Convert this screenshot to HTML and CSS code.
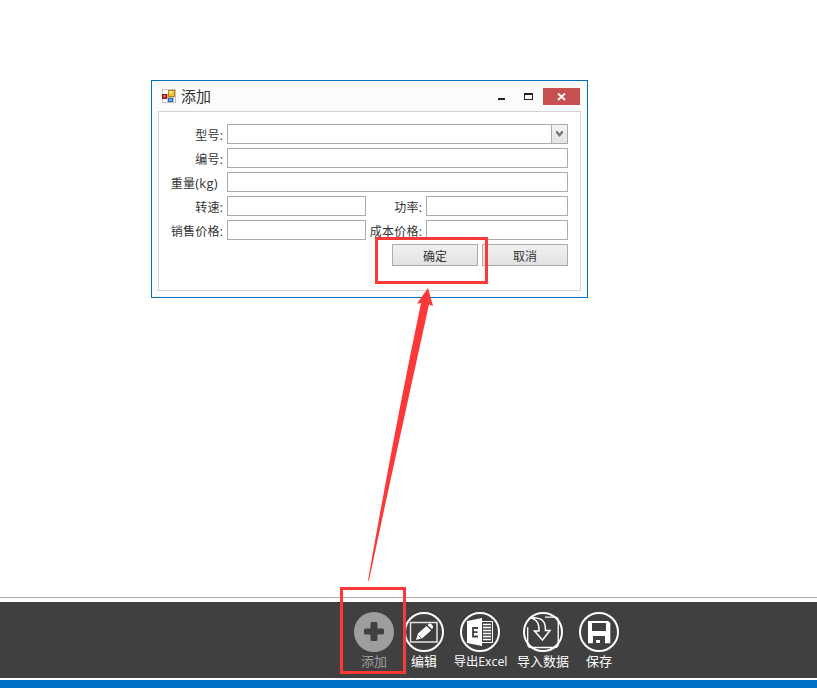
FILE: index.html
```html
<!DOCTYPE html>
<html lang="zh-CN">
<head>
<meta charset="utf-8">
<title>添加</title>
<link rel="stylesheet" href="styles.css">
</head>
<body>
<main class="workspace">
  <section class="dialog">
    <header class="titlebar">
      <svg class="app-icon" width="14" height="14" viewBox="0 0 14 14" shape-rendering="crispEdges">
        <path d="M0 0h14v14H0z" fill="#c3c3c3"/><path d="M1 1h5v4H1zM1 10h4v3H1zM12 8h1v5h-1z" fill="#fff"/>
        <path d="M0 5h5v5H0z" fill="#9c1313"/><path d="M1 6h3v3H1z" fill="#c92e20"/><path d="M2 6h1v2H2z" fill="#f5a69a"/>
        <path d="M6 1h7v7H6z" fill="#b98212"/><path d="M7 2h5v5H7z" fill="#fbc72e"/><path d="M7 2h3v2H7z" fill="#ffe88a"/>
        <path d="M6 9h5v4H6z" fill="#2c63c9"/><path d="M7 10h3v2H7z" fill="#78aaf4"/>
      </svg>
      <h1 class="title">添加</h1>
      <svg class="controls" width="84" height="17" viewBox="0 0 84 17">
        <path d="M2 10h7v2H2z" fill="#222"/>
        <path d="M28 5h9v7h-9zM29 7v4h7V7z" fill="#222" fill-rule="evenodd"/>
        <path d="M47 0h37v17H47z" fill="#c75050"/>
        <path d="M62 5.500l7 6.500M69 5.500l-7 6.500" stroke="#fff" stroke-width="1.800"/>
      </svg>
    </header>
    <form class="panel">
      <label class="label" for="model">型号:</label>
      <div class="combo wide">
        <input class="combo-text" id="model">
        <button class="combo-button" type="button"><svg width="7" height="6" viewBox="0 0 7 6"><path d="M0 0h1.500l2 2.500L5.500 0H7v2L3.500 6 0 2z" fill="#777"/></svg></button>
      </div>
      <label class="label" for="code">编号:</label><input class="field wide" id="code">
      <label class="label start" for="weight">重量<span class="unit">(kg)</span></label><input class="field wide" id="weight">
      <label class="label" for="speed">转速:</label><input class="field" id="speed">
      <label class="label" for="power">功率:</label><input class="field" id="power">
      <label class="label" for="price">销售价格:</label><input class="field" id="price">
      <label class="label" for="cost">成本价格:</label><input class="field" id="cost">
      <div class="actions">
        <button class="button" type="button">确定</button>
        <button class="button" type="button">取消</button>
      </div>
    </form>
  </section>
</main>
<nav class="toolbar">
  <div class="tool active">
    <svg width="40" height="40" viewBox="0 0 40 40"><circle cx="20" cy="20" r="20" fill="#9e9e9e"/><path d="M18 10h4q1.500 0 1.500 1.500V16.500H28.500q1.500 0 1.500 1.500v3q0 1.500-1.500 1.500H23.500v5q0 1.500-1.500 1.500h-4q-1.500 0-1.500-1.500v-5h-5q-1.500 0-1.500-1.500v-3q0-1.500 1.500-1.500h5v-5q0-1.500 1.500-1.500z" fill="#404040"/></svg>
    <span>添加</span>
  </div>
  <div class="tool">
    <svg width="40" height="40" viewBox="0 0 40 40" fill="none" stroke="#fff"><circle cx="20" cy="20" r="19" stroke-width="2"/><path d="M6.500 10.500h26.500v19.500h-26.500z" stroke="#e4e4e4" stroke-width="1.500"/><path d="M12 28l2-6.500 8.500-7.500 4.500 4.500-8.500 7.500zM23.500 13l1.500-1.300q1.500-.5 3 1t1 3L27.800 17z" fill="#fff" stroke="none"/><path d="M14.500 23.500l2.500 2.500" stroke="#404040" stroke-width=".8"/></svg>
    <span>编辑</span>
  </div>
  <div class="tool export">
    <svg width="40" height="40" viewBox="0 0 40 40" fill="none" stroke="#fff"><circle cx="20" cy="20" r="19" stroke-width="2"/><path d="M7 9l15-3v28L7 31z" fill="#fff" stroke="none"/><path d="M22 9.500h10.500v21H22"/><path d="M23 12.500h8M23 15.500h8M23 18.500h8M23 21.500h8M23 24.500h8M23 27.500h8" stroke-width="1.300"/><path d="M18 16H13v8.500h5M13 20.200h4.500" stroke="#404040" stroke-width="1.800"/></svg>
    <span>导出Excel</span>
  </div>
  <div class="tool">
    <svg width="40" height="40" viewBox="0 0 40 40" fill="none" stroke="#fff"><circle cx="20" cy="20" r="19" stroke-width="2"/><path d="M4.700 15v17q0 3.500 3.500 3.500h23.500q3.500 0 3.500-3.500V8.500q0-3.300-3.500-3.300H22" stroke-width="1.300"/><path d="M7 5.500q6.500 2 8 6t1 7.500h-4.500L19.500 28 27 18.500h-4.500q0-7-2.500-9.500-3-3.500-13-3.500z" stroke-width="1.500"/></svg>
    <span>导入数据</span>
  </div>
  <div class="tool">
    <svg width="40" height="40" viewBox="0 0 40 40"><circle cx="20" cy="20" r="19" fill="none" stroke="#fff" stroke-width="2"/><path d="M9 9h20l2.300 2v20.300H9zM13 11v8h14v-8zM14 24v7.300h12v-7.300z" fill="#fff" fill-rule="evenodd"/><path d="M17 28h4v3h-4z" fill="#fff"/></svg>
    <span>保存</span>
  </div>
</nav>
<footer class="statusbar"></footer>
<svg class="annotations" width="817" height="688" viewBox="0 0 817 688">
  <path d="M376.500 238.500h110v44h-110zM341.500 588.500h63v84h-63z" fill="none" stroke="#fd3838" stroke-width="3"/>
  <path d="M428 288l5 18-4-1.500Q408 400 386 501L369 580.500h-1Q393 437 421 303l-4 .5z" fill="#fd3838"/>
</svg>
</body>
</html>
```
FILE: styles.css
```css
* { box-sizing: border-box; }
body {
  display: flex;
  flex-direction: column;
  height: 688px;
  margin: 0;
  overflow: hidden;
  background: #fff;
  color: #333;
  font: 12px/18px "Open Sans", "Noto Sans CJK SC", sans-serif;
}
.workspace {
  height: 598px;
  padding: 80px 0 0 151px;
  border-bottom: 1px solid #ababab;
}
.dialog {
  width: 437px;
  height: 218px;
  padding: 0 6px;
  border: 1px solid #0072c6;
  background: #fbfbfb;
}
.titlebar {
  display: flex;
  align-items: center;
  height: 30px;
  padding: 0 1px 0 4px;
}
.title {
  margin: 0 0 0 5px;
  font-size: 15px;
  font-weight: 400;
  line-height: 20px;
}
.controls { margin-left: auto; }
.panel {
  display: grid;
  grid-template-columns: 56px 139px 60px 142px;
  grid-auto-rows: 20px;
  row-gap: 4px;
  height: 180px;
  padding: 12px;
  border: 1px solid #d4d4d4;
  background: #fff;
}
.label {
  display: flex;
  justify-content: flex-end;
  padding: 3px 4px 0 0;
  letter-spacing: 0.2px;
  line-height: 17px;
  white-space: nowrap;
}
.label.start { padding-right: 9px; }
.unit { font-size: 13px; letter-spacing: 0.3px; }
.field, .combo {
  min-width: 0;
  width: 100%;
  height: 20px;
  padding: 0;
  border: 1px solid #ababab;
  background: #fff;
}
.wide { grid-column: 2 / -1; }
.combo { display: flex; }
.combo-text { flex: 1; min-width: 0; padding: 0; border: 0; background: none; }
.combo-button {
  display: flex;
  align-items: center;
  justify-content: center;
  width: 16px;
  padding: 0;
  border: 0;
  border-left: 1px solid #ababab;
  background: linear-gradient(#f3f3f3, #e3e3e3);
}
.actions {
  display: flex;
  grid-column: 1 / -1;
  justify-content: flex-end;
  gap: 4px;
}
.button {
  width: 86px;
  height: 22px;
  padding: 3px 0 0;
  border: 1px solid #ababab;
  background: linear-gradient(#f1f1f1, #e2e2e2);
  color: #333;
  font: inherit;
  line-height: 17px;
}
.toolbar {
  display: flex;
  gap: 10px;
  height: 76px;
  margin-top: 4px;
  padding: 10px 0 0 354px;
  background: #404040;
}
.tool {
  display: flex;
  flex-direction: column;
  align-items: center;
  min-width: 40px;
  color: #fff;
  font-size: 13px;
  line-height: 18px;
  white-space: nowrap;
}
.tool svg { flex: none; }
.export { width: 53px; }
.export svg { align-self: flex-start; margin-left: 6px; }
.export span { font-size: 12.3px; line-height: 19px; }
.active { color: #9e9e9e; }
.statusbar { height: 8px; margin-top: 2px; background: #0072c6; }
.annotations { position: absolute; top: 0; left: 0; pointer-events: none; }
```
